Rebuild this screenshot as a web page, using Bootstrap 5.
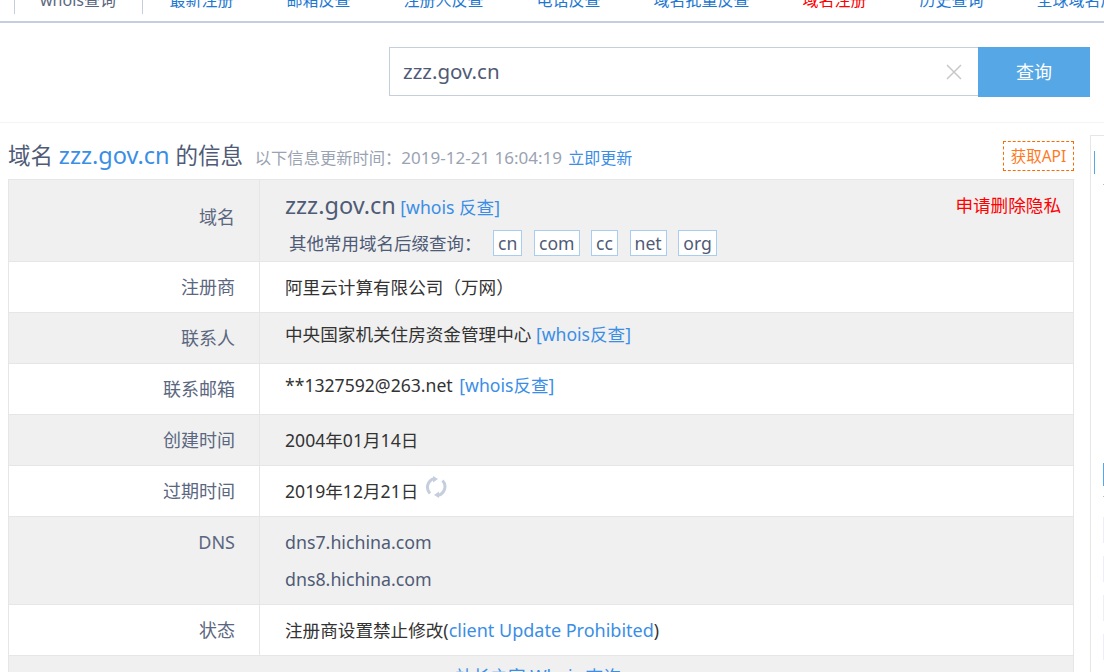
<!DOCTYPE html>
<html lang="zh">
<head>
  <meta charset="UTF-8" />
  <title>zzz.gov.cn whois</title>
  <link href="https://cdn.jsdelivr.net/npm/bootstrap@5.3.3/dist/css/bootstrap.min.css" rel="stylesheet" />
  <style>
    html, body { height: 672px; overflow: hidden; }
    body {
      font-family: "Noto Sans", "Noto Sans CJK SC", sans-serif;
      font-size: 17.6px;
      color: #333;
      background: #fff;
    }
    a { text-decoration: none; color: #3a8ee6; }

    .top-tabs {
      height: 23px;
      border-bottom: 2px solid #c5cedd;
      padding-left: 14px;
      flex-wrap: nowrap;
      white-space: nowrap;
      overflow: hidden;
    }
    .top-tabs a {
      display: block;
      height: 24px;
      line-height: 20px;
      margin-top: -10px;
      font-size: 16px;
      color: #1e78d2;
      padding: 0 26.5px;
      flex: none;
    }
    .top-tabs a.now {
      color: #5b6780;
      padding: 0 26px 0 25px;
      border: 1px solid #c5cedd;
      border-top: 0;
      border-bottom: 0;
    }
    .top-tabs a.hot { color: #f00; }

    .search-bar {
      height: 100px;
      padding: 24px 14px 0 389px;
      border-bottom: 1px solid #f3f4f6;
    }
    .search-box {
      width: 589px;
      height: 49px;
      border: 1px solid #c5cedd;
      border-right: 0;
      padding: 0 16px 0 13px;
      color: #4f5b76;
      font-size: 20.5px;
    }
    .search-btn {
      width: 112px;
      height: 50px;
      background: #55a7e6;
      color: #fff;
      font-size: 18px;
      border: 0;
      border-radius: 0;
    }

    .main-col { width: 1066px; margin-left: 8px; flex: none; }
    .side-col {
      width: 30px;
      margin-left: 16px;
      margin-top: 12px;
      height: 600px;
      flex: none;
      padding: 15px 0 0 3px;
      border: 1px solid #e6e6e6;
      border-right: 0;
    }
    .side-bar { width: 1px; height: 23px; background: #55a7e6; }
    .side-dot { width: 1px; height: 1px; background: #bbb; margin: 10px 0 0 9px; }
    .side-bar.low { margin: 278px 0 0 9px; }
    .side-tile { width: 1px; height: 26px; background: #eeeef8; margin: 13px 0 0 9px; }
    .side-dot + .side-tile { margin-top: 20px; }
    .title-row { height: 56px; padding-top: 15px; }
    .title-row h1 { font-size: 22.5px; font-weight: 400; color: #4f5b76; margin: 0; line-height: 34px; }
    .title-row h1 > a { font-size: 23.5px; }
    .title-row small { font-size: 16.3px; color: #9aa3b2; margin-left: 6px; }
    .title-row small span { font-size: 17px; }
    .title-row small a { font-size: 16px; margin-left: 2px; }
    .api-tag {
      width: 71px;
      height: 30px;
      margin-top: 3px;
      border: 1px dashed #ff6a00;
      color: #ff7a1f;
      font-size: 15.5px;
      line-height: 28px;
      text-align: center;
    }

    .info-row { border: 1px solid #e6e6e6; border-top: 0; }
    .info-row:first-child { border-top: 1px solid #e6e6e6; }
    .info-row.shade { background: #f0f0f0; }
    .info-label {
      width: 251px;
      flex: none;
      text-align: right;
      padding: 13px 24px 0 0;
      font-size: 18px;
      color: #5b6780;
      border-right: 1px solid #e6e6e6;
      line-height: 25px;
    }
    .info-value { padding: 8px 12px 0 25px; line-height: 26px; color: #333; flex: 1; }
    .info-value.mid { padding-top: 12px; }
    .info-value.plain { color: #4f5b76; font-size: 17.8px; }
    .h50 { height: 51px; }
    .domain-big { font-size: 23.5px; color: #4f5b76; }
    .suffix-line { color: #4f5b76; margin-left: 4px; margin-top: 10px; font-size: 17.5px; }
    .suffix-line span { margin-right: 7px; }
    .suffix-line a {
      display: inline-block;
      border: 1px solid #a8cdee;
      background: #fff;
      color: #4f5b76;
      font-size: 17.6px;
      padding: 0 4px;
      height: 26px;
      line-height: 24px;
      margin-right: 7px;
    }
    .privacy-link { color: #f00; }
    .email-link { margin-left: 2px; }
    .status-link { font-size: 18px; }
    .spin-icon { width: 22px; height: 22px; margin-left: 7px; margin-top: -2px; }
    .foot-row { height: 40px; text-align: center; padding: 7px 6px 0 0; }
  </style>
</head>
<body>
  <!-- top tabs -->
  <nav class="top-tabs d-flex">
    <a class="now" href="#">whois查询</a>
    <a href="#">最新注册</a>
    <a href="#">邮箱反查</a>
    <a href="#">注册人反查</a>
    <a href="#">电话反查</a>
    <a href="#">域名批量反查</a>
    <a class="hot" href="#">域名注册</a>
    <a href="#">历史查询</a>
    <a href="#">全球域名后缀</a>
  </nav>

  <!-- search -->
  <div class="search-bar d-flex">
    <div class="search-box d-flex align-items-center justify-content-between">
      <span>zzz.gov.cn</span>
      <svg width="16" height="16" viewBox="0 0 16 16" fill="none" stroke="#c8c8c8" stroke-width="1.5"><path d="M1 1l14 14M15 1L1 15"/></svg>
    </div>
    <button class="btn search-btn" type="button">查询</button>
  </div>

  <div class="d-flex">
    <div class="main-col">
      <div class="title-row d-flex justify-content-between">
        <h1>域名 <a href="#">zzz.gov.cn</a> 的信息 <small>以下信息更新时间：<span>2019-12-21 16:04:19</span> <a href="#">立即更新</a></small></h1>
        <a class="api-tag" href="#">获取API</a>
      </div>

      <div>
        <div class="info-row shade d-flex" style="height:83px">
          <div class="info-label" style="padding-top:25px">域名</div>
          <div class="info-value mid">
            <div class="d-flex justify-content-between">
              <div><span class="domain-big">zzz.gov.cn</span> <a href="#">[whois 反查]</a></div>
              <a class="privacy-link" href="#">申请删除隐私</a>
            </div>
            <div class="suffix-line"><span>其他常用域名后缀查询：</span> <a href="#">cn</a> <a href="#">com</a> <a href="#">cc</a> <a href="#">net</a> <a href="#">org</a></div>
          </div>
        </div>
        <div class="info-row d-flex h50">
          <div class="info-label">注册商</div>
          <div class="info-value mid">阿里云计算有限公司（万网）</div>
        </div>
        <div class="info-row shade d-flex h50">
          <div class="info-label">联系人</div>
          <div class="info-value">中央国家机关住房资金管理中心 <a href="#">[whois反查]</a></div>
        </div>
        <div class="info-row d-flex h50">
          <div class="info-label">联系邮箱</div>
          <div class="info-value">**1327592@263.net <a class="email-link" href="#">[whois反查]</a></div>
        </div>
        <div class="info-row shade d-flex h50">
          <div class="info-label">创建时间</div>
          <div class="info-value mid">2004年01月14日</div>
        </div>
        <div class="info-row d-flex h50">
          <div class="info-label">过期时间</div>
          <div class="info-value mid d-flex align-items-start">2019年12月21日
            <svg class="spin-icon" viewBox="0 0 22 22" fill="none" stroke="#c5cedd" stroke-width="3"><path d="M5 17.5A9 9 0 0 1 9 2.6"/><path d="M17.5 4.5A9 9 0 0 1 13 19.4"/><path d="M8 0l5 3-5 3.5z" fill="#c5cedd" stroke="none"/><path d="M14 22l-5-3 5-3.5z" fill="#c5cedd" stroke="none"/></svg>
          </div>
        </div>
        <div class="info-row shade d-flex" style="height:88px">
          <div class="info-label">DNS</div>
          <div class="info-value plain mid">
            <div>dns7.hichina.com</div>
            <div style="margin-top:11px">dns8.hichina.com</div>
          </div>
        </div>
        <div class="info-row d-flex h50">
          <div class="info-label">状态</div>
          <div class="info-value mid">注册商设置禁止修改(<a class="status-link" href="#">client Update Prohibited</a>)</div>
        </div>
        <div class="info-row shade foot-row"><a href="#">站长之家 Whois 查询</a></div>
      </div>
    </div>
    <div class="side-col">
      <div class="side-bar"></div>
      <div class="side-dot"></div>
      <div class="side-bar low"></div>
      <div class="side-dot"></div>
      <div class="side-tile"></div>
      <div class="side-tile"></div>
      <div class="side-tile"></div>
      <div class="side-tile"></div>
    </div>
  </div>
<script src="https://cdn.jsdelivr.net/npm/bootstrap@5.3.3/dist/js/bootstrap.bundle.min.js"></script>
</body>
</html>
